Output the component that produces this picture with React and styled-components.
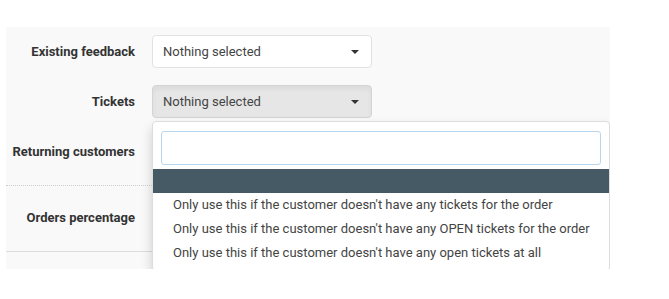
import styled, { createGlobalStyle } from 'styled-components';

const GlobalStyle = createGlobalStyle`
  body {
    margin: 0;
    background: #fff;
    font-family: Roboto, "Liberation Sans", sans-serif;
    color: #333;
  }
`;

const Page = styled.div`
  padding: 27px 59px 0 6px;
`;

const Panel = styled.div`
  position: relative;
  height: 242px;
  padding-top: 8px;
  box-sizing: border-box;
  overflow: hidden;

  background: #f9f9f9;
`;

const Row = styled.div`
  display: flex;
  align-items: center;
  height: 33px;
  margin-bottom: ${(p) => p.$gap || 17}px;
`;

const Label = styled.label`
  width: 146px;
  padding-right: 17px;
  box-sizing: border-box;

  text-align: right;
  font-weight: 700;
  font-size: 13px;
  color: #333;
`;

const Field = styled.div`
  position: relative;
  width: 220px;
  height: 33px;
`;

const SelectButton = styled.div`
  display: flex;
  align-items: center;
  justify-content: space-between;
  height: 100%;
  padding: 0 12px 0 10px;
  box-sizing: border-box;

  background: ${(p) => (p.$open ? '#e6e6e6' : '#fff')};
  border: 1px solid ${(p) => (p.$open ? '#d4d4d4' : '#e2e2e2')};
  border-radius: 4px;
  box-shadow: ${(p) => (p.$open ? 'inset 0 3px 5px rgba(0,0,0,.05)' : 'none')};
  font-size: 13px;
  color: #444;
`;

const Caret = styled.span`
  width: 0;
  height: 0;
  border-top: 4px solid #333;
  border-left: 4px solid transparent;
  border-right: 4px solid transparent;
`;

const Divider = styled.div`
  height: 0;
  border-top: 1px ${(p) => (p.$dotted ? 'dotted #cfcfcf' : 'solid #dcdcdc')};
  margin-bottom: ${(p) => p.$gap || 0}px;
`;

const Menu = styled.div`
  position: absolute;
  top: calc(100% + 3px);
  left: 0;
  z-index: 10;
  width: 458px;
  padding: 5px 0;
  box-sizing: border-box;

  background: #fff;
  border: 1px solid #ddd;
  border-radius: 4px;
  box-shadow: 0 6px 12px rgba(0, 0, 0, 0.175);
`;

const SearchBox = styled.div`
  padding: 4px 8px;
`;

const SearchInput = styled.input`
  display: block;
  width: 100%;
  height: 34px;
  box-sizing: border-box;

  border: 1px solid #b9d6ec;
  border-radius: 3px;
  outline: none;
  background: #fff;
`;

const Item = styled.div`
  height: 24px;
  padding: 0 20px;
  line-height: 24px;
  white-space: nowrap;

  background: ${(p) => (p.$active ? '#455a64' : 'transparent')};
  font-size: 13px;
  color: #444;
`;

const options = [
  '',
  "Only use this if the customer doesn't have any tickets for the order",
  "Only use this if the customer doesn't have any OPEN tickets for the order",
  "Only use this if the customer doesn't have any open tickets at all",
];

export default function App() {
  return (
    <>
      <GlobalStyle />
      <Page>
        <Panel>
          <Row>
            <Label>Existing feedback</Label>
            <Field>
              <SelectButton>
                Nothing selected
                <Caret />
              </SelectButton>
            </Field>
          </Row>

          <Row>
            <Label>Tickets</Label>
            <Field>
              <SelectButton $open>
                Nothing selected
                <Caret />
              </SelectButton>
              <Menu>
                <SearchBox>
                  <SearchInput />
                </SearchBox>
                {options.map((text, i) => (
                  <Item key={i} $active={i === 0}>
                    {text}
                  </Item>
                ))}
              </Menu>
            </Field>
          </Row>

          <Row $gap={17}>
            <Label>Returning customers</Label>
            <Field>
              <SelectButton>
                Nothing selected
                <Caret />
              </SelectButton>
            </Field>
          </Row>

          <Divider $dotted $gap={15} />

          <Row>
            <Label>Orders percentage</Label>
          </Row>

          <Divider />
        </Panel>
      </Page>
    </>
  );
}
